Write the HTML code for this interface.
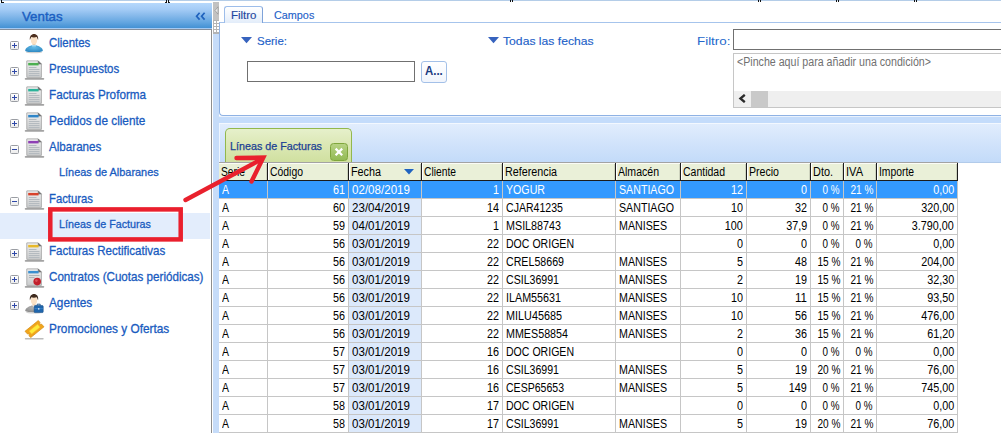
<!DOCTYPE html>
<html><head><meta charset="utf-8"><title>Ventas</title>
<style>
html,body{margin:0;padding:0;}
body{width:1001px;height:433px;overflow:hidden;background:#fff;position:relative;font-family:"Liberation Sans",sans-serif;}
div,svg{position:absolute;}
.t{white-space:nowrap;line-height:16px;}
.pm{width:7px;height:7px;border:1px solid #9a9da3;border-radius:1.5px;background:linear-gradient(#fff,#ececec);}
.pm i{position:absolute;left:1px;top:3px;width:5px;height:1px;background:#2f48a8;}
.pm b{position:absolute;left:3px;top:1px;width:1px;height:5px;background:#2f48a8;}
.vl{width:1px;background:#c6c6c6;}
.hl{height:1px;background:#c6c6c6;}
</style></head><body>

<div style="left:0px;top:0px;width:1001px;height:1px;background:#b4cde8"></div>
<div style="left:1px;top:0px;width:1px;height:3px;background:#111"></div>
<div style="left:2px;top:2px;width:2px;height:1px;background:#111"></div>
<div style="left:165px;top:2px;width:1px;height:1px;background:#222"></div>
<div style="left:166px;top:0px;width:1px;height:3px;background:#111"></div>
<div style="left:168px;top:0px;width:1px;height:3px;background:#111"></div>
<div style="left:169px;top:2px;width:1px;height:1px;background:#222"></div>
<div style="left:509px;top:2px;width:1px;height:1px;background:#222"></div>
<div style="left:510px;top:0px;width:1px;height:3px;background:#111"></div>
<div style="left:512px;top:0px;width:1px;height:3px;background:#111"></div>
<div style="left:513px;top:2px;width:1px;height:1px;background:#222"></div>
<div style="left:757px;top:2px;width:1px;height:1px;background:#222"></div>
<div style="left:758px;top:0px;width:1px;height:3px;background:#111"></div>
<div style="left:760px;top:0px;width:1px;height:3px;background:#111"></div>
<div style="left:761px;top:2px;width:1px;height:1px;background:#222"></div>
<div style="left:835px;top:2px;width:1px;height:1px;background:#222"></div>
<div style="left:836px;top:0px;width:1px;height:3px;background:#111"></div>
<div style="left:838px;top:0px;width:1px;height:3px;background:#111"></div>
<div style="left:839px;top:2px;width:1px;height:1px;background:#222"></div>
<div style="left:913px;top:2px;width:1px;height:1px;background:#222"></div>
<div style="left:914px;top:0px;width:1px;height:3px;background:#111"></div>
<div style="left:916px;top:0px;width:1px;height:3px;background:#111"></div>
<div style="left:917px;top:2px;width:1px;height:1px;background:#222"></div>
<div style="left:0px;top:3px;width:212px;height:25px;background:linear-gradient(#b6d8fc 0%,#a5ccf6 25%,#84b8ea 52%,#62a5e0 78%,#4391d4 100%)"></div>
<div style="left:0px;top:28px;width:212px;height:1px;background:#a4c9f2"></div>
<div style="left:0px;top:29px;width:212px;height:1px;background:#858e9b"></div>
<div style="left:211px;top:30px;width:1px;height:403px;background:#8e8e8e"></div>
<div class="t" style="left:22.10px;transform-origin:0 0;top:9.36px;font-size:12.8px;color:#1b5fc2;font-weight:normal;transform:scaleX(1.0372);-webkit-text-stroke:0.4px #1b5fc2;">Ventas</div>
<svg style="left:195px;top:12px" width="12" height="9" viewBox="0 0 12 9"><path d="M4.6 0.8 L1.6 4.2 L4.6 7.6 M9.6 0.8 L6.6 4.2 L9.6 7.6" fill="none" stroke="#1f62bd" stroke-width="1.7"/></svg>
<div style="left:0px;top:213px;width:210px;height:26px;background:#e3edfc"></div>
<div class="pm" style="left:10px;top:41px"><i></i><b></b></div>
<div style="left:24px;top:33px;width:22px;height:22px"><svg width="22" height="22" viewBox="0 0 22 22"><defs><radialGradient id="ub" cx="0.5" cy="0.35" r="0.7"><stop offset="0" stop-color="#63bbe8"/><stop offset="1" stop-color="#2b86c0"/></radialGradient></defs><ellipse cx="10" cy="19.3" rx="8" ry="1" fill="#d0d0d0"/><path d="M1.2 17.4 C1.5 14.6 5 13.2 7.8 12.2 L12.2 12.2 C15 13.2 18.5 14.6 18.8 17.4 C18.8 18.6 16 19 10 19 C4 19 1.2 18.6 1.2 17.4 Z" fill="url(#ub)"/><rect x="8.5" y="9.5" width="3" height="3.4" fill="#edc9a6"/><ellipse cx="10" cy="12.7" rx="2.5" ry="0.9" fill="#a9dcf5"/><ellipse cx="10" cy="7.3" rx="3.1" ry="4" fill="#fbe2c6"/><path d="M5.9 7 C5.3 3 7.5 0.9 10 0.9 C12.7 0.9 14.7 3 14.1 7 C13.5 6 13.4 4.7 12.5 4 C11 4.7 8.6 4.6 7.4 4 C6.6 4.8 6.5 6 5.9 7 Z" fill="#4e3020"/></svg></div>
<div class="t" style="left:49.30px;transform-origin:0 0;top:34.60px;font-size:12.7px;color:#195bc0;font-weight:normal;transform:scaleX(0.9001);-webkit-text-stroke:0.3px #195bc0;">Clientes</div>
<div class="pm" style="left:10px;top:67px"><i></i><b></b></div>
<div style="left:24px;top:59px;width:22px;height:22px"><svg width="22" height="22" viewBox="0 0 22 22"><defs><linearGradient id="dg" x1="0" y1="0" x2="0" y2="1"><stop offset="0" stop-color="#f0f0f0"/><stop offset="1" stop-color="#c9cbcc"/></linearGradient></defs><path d="M1.6 19.8 H19.4" stroke="#a2a2a2" stroke-width="1.7" stroke-linecap="round"/><path d="M2.8 1.9 H14.2 L17.4 5.1 V18.4 H2.8 Z" fill="url(#dg)" stroke="#b0b0b0"/><path d="M14.2 1.9 V5.1 H17.4 Z" fill="#6e6e6e" stroke="#6e6e6e" stroke-width="0.5"/><rect x="4.2" y="3.9" width="10.4" height="2.5" fill="#4caf50"/><path d="M4.8 8.5 H12.5 M4.8 10.5 H15.5 M4.8 12.5 H15.5 M4.8 14.5 H15.5 M4.8 16.5 H15.5" stroke="#b4babf" stroke-width="1"/></svg></div>
<div class="t" style="left:49.30px;transform-origin:0 0;top:60.60px;font-size:12.7px;color:#195bc0;font-weight:normal;transform:scaleX(0.9053);-webkit-text-stroke:0.3px #195bc0;">Presupuestos</div>
<div class="pm" style="left:10px;top:93px"><i></i><b></b></div>
<div style="left:24px;top:85px;width:22px;height:22px"><svg width="22" height="22" viewBox="0 0 22 22"><defs><linearGradient id="dg" x1="0" y1="0" x2="0" y2="1"><stop offset="0" stop-color="#f0f0f0"/><stop offset="1" stop-color="#c9cbcc"/></linearGradient></defs><path d="M1.6 19.8 H19.4" stroke="#a2a2a2" stroke-width="1.7" stroke-linecap="round"/><path d="M2.8 1.9 H14.2 L17.4 5.1 V18.4 H2.8 Z" fill="url(#dg)" stroke="#b0b0b0"/><path d="M14.2 1.9 V5.1 H17.4 Z" fill="#6e6e6e" stroke="#6e6e6e" stroke-width="0.5"/><rect x="4.2" y="3.9" width="10.4" height="2.5" fill="#2bb39a"/><path d="M4.8 8.5 H12.5 M4.8 10.5 H15.5 M4.8 12.5 H15.5 M4.8 14.5 H15.5 M4.8 16.5 H15.5" stroke="#b4babf" stroke-width="1"/></svg></div>
<div class="t" style="left:49.30px;transform-origin:0 0;top:86.60px;font-size:12.7px;color:#195bc0;font-weight:normal;transform:scaleX(0.9243);-webkit-text-stroke:0.3px #195bc0;">Facturas Proforma</div>
<div class="pm" style="left:10px;top:119px"><i></i><b></b></div>
<div style="left:24px;top:111px;width:22px;height:22px"><svg width="22" height="22" viewBox="0 0 22 22"><defs><linearGradient id="dg" x1="0" y1="0" x2="0" y2="1"><stop offset="0" stop-color="#f0f0f0"/><stop offset="1" stop-color="#c9cbcc"/></linearGradient></defs><path d="M1.6 19.8 H19.4" stroke="#a2a2a2" stroke-width="1.7" stroke-linecap="round"/><path d="M2.8 1.9 H14.2 L17.4 5.1 V18.4 H2.8 Z" fill="url(#dg)" stroke="#b0b0b0"/><path d="M14.2 1.9 V5.1 H17.4 Z" fill="#6e6e6e" stroke="#6e6e6e" stroke-width="0.5"/><rect x="4.2" y="3.9" width="10.4" height="2.5" fill="#2f86c9"/><path d="M4.8 8.5 H12.5 M4.8 10.5 H15.5 M4.8 12.5 H15.5 M4.8 14.5 H15.5 M4.8 16.5 H15.5" stroke="#b4babf" stroke-width="1"/></svg></div>
<div class="t" style="left:49.30px;transform-origin:0 0;top:112.60px;font-size:12.7px;color:#195bc0;font-weight:normal;transform:scaleX(0.9288);-webkit-text-stroke:0.3px #195bc0;">Pedidos de cliente</div>
<div class="pm" style="left:10px;top:145px"><i></i></div>
<div style="left:24px;top:137px;width:22px;height:22px"><svg width="22" height="22" viewBox="0 0 22 22"><defs><linearGradient id="dg" x1="0" y1="0" x2="0" y2="1"><stop offset="0" stop-color="#f0f0f0"/><stop offset="1" stop-color="#c9cbcc"/></linearGradient></defs><path d="M1.6 19.8 H19.4" stroke="#a2a2a2" stroke-width="1.7" stroke-linecap="round"/><path d="M2.8 1.9 H14.2 L17.4 5.1 V18.4 H2.8 Z" fill="url(#dg)" stroke="#b0b0b0"/><path d="M14.2 1.9 V5.1 H17.4 Z" fill="#6e6e6e" stroke="#6e6e6e" stroke-width="0.5"/><rect x="4.2" y="3.9" width="10.4" height="2.5" fill="#8e3fb5"/><path d="M4.8 8.5 H12.5 M4.8 10.5 H15.5 M4.8 12.5 H15.5 M4.8 14.5 H15.5 M4.8 16.5 H15.5" stroke="#b4babf" stroke-width="1"/></svg></div>
<div class="t" style="left:49.30px;transform-origin:0 0;top:138.60px;font-size:12.7px;color:#195bc0;font-weight:normal;transform:scaleX(0.9163);-webkit-text-stroke:0.3px #195bc0;">Albaranes</div>
<div class="t" style="left:58.60px;transform-origin:0 0;top:163.98px;font-size:11.6px;color:#195bc0;font-weight:normal;transform:scaleX(0.9435);-webkit-text-stroke:0.3px #195bc0;">Líneas de Albaranes</div>
<div class="pm" style="left:10px;top:197px"><i></i></div>
<div style="left:24px;top:189px;width:22px;height:22px"><svg width="22" height="22" viewBox="0 0 22 22"><defs><linearGradient id="dg" x1="0" y1="0" x2="0" y2="1"><stop offset="0" stop-color="#f0f0f0"/><stop offset="1" stop-color="#c9cbcc"/></linearGradient></defs><path d="M1.6 19.8 H19.4" stroke="#a2a2a2" stroke-width="1.7" stroke-linecap="round"/><path d="M2.8 1.9 H14.2 L17.4 5.1 V18.4 H2.8 Z" fill="url(#dg)" stroke="#b0b0b0"/><path d="M14.2 1.9 V5.1 H17.4 Z" fill="#6e6e6e" stroke="#6e6e6e" stroke-width="0.5"/><rect x="4.2" y="3.9" width="10.4" height="2.5" fill="#d8432b"/><path d="M4.8 8.5 H12.5 M4.8 10.5 H15.5 M4.8 12.5 H15.5 M4.8 14.5 H15.5 M4.8 16.5 H15.5" stroke="#b4babf" stroke-width="1"/></svg></div>
<div class="t" style="left:49.30px;transform-origin:0 0;top:190.60px;font-size:12.7px;color:#195bc0;font-weight:normal;transform:scaleX(0.8906);-webkit-text-stroke:0.3px #195bc0;">Facturas</div>
<div class="t" style="left:58.60px;transform-origin:0 0;top:215.98px;font-size:11.6px;color:#195bc0;font-weight:normal;transform:scaleX(0.9265);-webkit-text-stroke:0.3px #195bc0;">Líneas de Facturas</div>
<div class="pm" style="left:10px;top:249px"><i></i><b></b></div>
<div style="left:24px;top:241px;width:22px;height:22px"><svg width="22" height="22" viewBox="0 0 22 22"><defs><linearGradient id="dg" x1="0" y1="0" x2="0" y2="1"><stop offset="0" stop-color="#f0f0f0"/><stop offset="1" stop-color="#c9cbcc"/></linearGradient></defs><path d="M1.6 19.8 H19.4" stroke="#a2a2a2" stroke-width="1.7" stroke-linecap="round"/><path d="M2.8 1.9 H14.2 L17.4 5.1 V18.4 H2.8 Z" fill="url(#dg)" stroke="#b0b0b0"/><path d="M14.2 1.9 V5.1 H17.4 Z" fill="#6e6e6e" stroke="#6e6e6e" stroke-width="0.5"/><rect x="4.2" y="3.9" width="10.4" height="2.5" fill="#e8b92a"/><path d="M4.8 8.5 H12.5 M4.8 10.5 H15.5 M4.8 12.5 H15.5 M4.8 14.5 H15.5 M4.8 16.5 H15.5" stroke="#b4babf" stroke-width="1"/></svg></div>
<div class="t" style="left:49.30px;transform-origin:0 0;top:242.60px;font-size:12.7px;color:#195bc0;font-weight:normal;transform:scaleX(0.9112);-webkit-text-stroke:0.3px #195bc0;">Facturas Rectificativas</div>
<div class="pm" style="left:10px;top:275px"><i></i><b></b></div>
<div style="left:24px;top:267px;width:22px;height:22px"><svg width="22" height="22" viewBox="0 0 22 22"><defs><linearGradient id="dg" x1="0" y1="0" x2="0" y2="1"><stop offset="0" stop-color="#f0f0f0"/><stop offset="1" stop-color="#c9cbcc"/></linearGradient></defs><path d="M1.6 19.8 H19.4" stroke="#a2a2a2" stroke-width="1.7" stroke-linecap="round"/><path d="M2.8 1.9 H14.2 L17.4 5.1 V18.4 H2.8 Z" fill="url(#dg)" stroke="#b0b0b0"/><path d="M14.2 1.9 V5.1 H17.4 Z" fill="#6e6e6e" stroke="#6e6e6e" stroke-width="0.5"/><rect x="4.2" y="3.9" width="10.4" height="2.5" fill="#3a8fd0"/><path d="M5 8.5 H15.5 M5 10.5 H10.5" stroke="#aeb4b8"/><circle cx="13.2" cy="14.6" r="3.8" fill="#c2202c"/><circle cx="12.4" cy="13.6" r="1.3" fill="#d9525a"/></svg></div>
<div class="t" style="left:49.30px;transform-origin:0 0;top:268.60px;font-size:12.7px;color:#195bc0;font-weight:normal;transform:scaleX(0.9164);-webkit-text-stroke:0.3px #195bc0;">Contratos (Cuotas periódicas)</div>
<div class="pm" style="left:10px;top:301px"><i></i><b></b></div>
<div style="left:24px;top:293px;width:22px;height:22px"><svg width="22" height="22" viewBox="0 0 22 22"><defs><radialGradient id="ab" cx="0.5" cy="0.35" r="0.7"><stop offset="0" stop-color="#b4b4b4"/><stop offset="1" stop-color="#8a8a8a"/></radialGradient></defs><ellipse cx="10" cy="19.5" rx="8" ry="0.9" fill="#d4d4d4"/><path d="M1.2 17.6 C1.5 14.8 5 13.4 7.8 12.4 L12.2 12.4 C15 13.4 17.5 14.8 17.8 17.6 C17.8 18.8 16 19.2 10 19.2 C4 19.2 1.2 18.8 1.2 17.6 Z" fill="url(#ab)"/><rect x="8.5" y="9.7" width="3" height="3.4" fill="#edc9a6"/><path d="M8.2 12.4 L10 14.6 L11.8 12.4 Z" fill="#f4f4f4"/><ellipse cx="10" cy="7.5" rx="3.1" ry="4" fill="#fbe2c6"/><path d="M5.9 7.2 C5.3 3.2 7.5 1.1 10 1.1 C12.7 1.1 14.7 3.2 14.1 7.2 C13.5 6.2 13.4 4.9 12.5 4.2 C11 4.9 8.6 4.8 7.4 4.2 C6.6 5 6.5 6.2 5.9 7.2 Z" fill="#3e2a1e"/><rect x="10.2" y="12.6" width="9" height="7" rx="0.9" fill="#1f66ad" stroke="#184f88" stroke-width="0.6"/><path d="M13.2 12.6 V11.2 H16.2 V12.6" fill="none" stroke="#184f88" stroke-width="0.9"/><rect x="10.5" y="15.3" width="8.4" height="0.8" fill="#3f86cc"/><rect x="14.1" y="15.1" width="1.3" height="1.5" fill="#e4eefa"/></svg></div>
<div class="t" style="left:49.30px;transform-origin:0 0;top:294.60px;font-size:12.7px;color:#195bc0;font-weight:normal;transform:scaleX(0.9291);-webkit-text-stroke:0.3px #195bc0;">Agentes</div>
<div style="left:24px;top:319px;width:22px;height:22px"><svg width="22" height="22" viewBox="0 0 22 22"><path d="M1.5 19.7 H19" stroke="#bcbcbc" stroke-width="1.4" stroke-linecap="round"/><path d="M1 12.3 L14.3 1.5 L16 3.4 A1 1 0 0 0 17.4 5 L20 7.8 L6.7 18.6 L5 16.7 A1 1 0 0 0 3.6 15.1 Z" fill="#f1a41c" stroke="#d38d10" stroke-width="0.7"/><path d="M5.2 12.1 L13.6 5.3 L16 8.2 L7.6 15 Z" fill="#ffea3a" stroke="#f6c62a" stroke-width="0.6"/></svg></div>
<div class="t" style="left:49.30px;transform-origin:0 0;top:320.60px;font-size:12.7px;color:#195bc0;font-weight:normal;transform:scaleX(0.9314);-webkit-text-stroke:0.3px #195bc0;">Promociones y Ofertas</div>
<div style="left:213px;top:2px;width:6px;height:431px;background:#c6dcf9"></div>
<div style="left:213px;top:2px;width:6px;height:18px;background:#c2c2c2"></div>
<div style="left:213px;top:20px;width:6px;height:14px;background:#b4b4b4"></div>
<svg style="left:214px;top:6px" width="5" height="9"><path d="M4 0.8 L1 4.5 L4 8.2 Z" fill="#e8e8e8" stroke="#909090" stroke-width="0.7"/></svg>
<svg style="left:213px;top:20px" width="6" height="14"><g fill="#ffffff"><rect x="1" y="1" width="2" height="2"/><rect x="4" y="1" width="2" height="2"/><rect x="1" y="4" width="2" height="2"/><rect x="4" y="4" width="2" height="2"/><rect x="1" y="7" width="2" height="2"/><rect x="4" y="7" width="2" height="2"/><rect x="1" y="10" width="2" height="2"/><rect x="4" y="10" width="2" height="2"/></g></svg>
<div style="left:219px;top:2px;width:782px;height:114px;background:#fff"></div>
<div style="left:219px;top:22px;width:783px;height:94px;box-sizing:border-box;border:1px solid #8fb2e4;border-top-color:#a6c4ec;border-right:none;border-radius:0 0 0 4px"></div>
<div style="left:224px;top:6px;width:39px;height:17px;box-sizing:border-box;border:1px solid #9dbdea;border-right-color:#7fa3d9;border-bottom:none;border-radius:3px 3px 0 0;background:linear-gradient(#ffffff,#e3edfa)"></div>
<div style="left:225px;top:22px;width:37px;height:1px;background:#e3edfa"></div>
<div class="t" style="left:230.50px;transform-origin:0 0;top:7.08px;font-size:11.3px;color:#1f48a0;font-weight:normal;transform:scaleX(1.0155);-webkit-text-stroke:0.15px #1f48a0;">Filtro</div>
<div class="t" style="left:273.70px;transform-origin:0 0;top:7.08px;font-size:11.3px;color:#1c60c8;font-weight:normal;transform:scaleX(0.9578);-webkit-text-stroke:0.12px #1c60c8;">Campos</div>
<svg style="left:241px;top:37px" width="12" height="7"><path d="M0 0 H11 L5.5 6.2 Z" fill="#3763be"/></svg>
<div class="t" style="left:256.70px;transform-origin:0 0;top:33.08px;font-size:11.3px;color:#1c60c8;font-weight:normal;transform:scaleX(1.0163);-webkit-text-stroke:0.12px #1c60c8;">Serie:</div>
<div style="left:247px;top:61px;width:168px;height:21px;box-sizing:border-box;border:1px solid #707070;background:#fff"></div>
<div style="left:421px;top:61px;width:26px;height:22px;box-sizing:border-box;border:1px solid #a3c0e8;border-radius:3px;background:linear-gradient(#ffffff,#f1f5fc)"></div>
<div class="t" style="left:425.30px;transform-origin:0 0;top:62.84px;font-size:12px;color:#1a3a80;font-weight:bold;transform:scaleX(0.9535);">A...</div>
<svg style="left:488.1px;top:37px" width="12" height="7"><path d="M0 0 H11 L5.5 6.2 Z" fill="#3763be"/></svg>
<div class="t" style="left:503.30px;transform-origin:0 0;top:33.08px;font-size:11.3px;color:#1c60c8;font-weight:normal;transform:scaleX(1.0776);-webkit-text-stroke:0.12px #1c60c8;">Todas las fechas</div>
<div class="t" style="left:697.40px;transform-origin:0 0;top:33.08px;font-size:11.3px;color:#2468cc;font-weight:normal;transform:scaleX(1.1823);">Filtro:</div>
<div style="left:733px;top:29px;width:270px;height:21px;box-sizing:border-box;border:1px solid #707070;background:#fff"></div>
<div style="left:733px;top:53px;width:270px;height:55px;box-sizing:border-box;border:1px solid #c6c6c6;background:#fff"></div>
<div class="t" style="left:736.50px;transform-origin:0 0;top:54.34px;font-size:12.3px;color:#707070;font-weight:normal;transform:scaleX(0.8649);">&lt;Pinche aquí para añadir una condición&gt;</div>
<div style="left:734px;top:91px;width:268px;height:16px;background:#efefef"></div>
<div style="left:751px;top:91px;width:17px;height:16px;background:#c9c9c9"></div>
<svg style="left:738px;top:94px" width="9" height="9"><path d="M6.8 0.8 L2.4 4.5 L6.8 8.2" fill="none" stroke="#2a2a2a" stroke-width="2.3"/></svg>
<div style="left:219px;top:116px;width:782px;height:1px;background:#eaf2fd"></div>
<div style="left:219px;top:117px;width:782px;height:6px;background:#c4dcfb"></div>
<div style="left:219px;top:123px;width:782px;height:1px;background:#f3f8ff"></div>
<div style="left:219px;top:124px;width:782px;height:38px;background:linear-gradient(#e1edfd 0%,#d3e4fb 45%,#c3dbf9 100%)"></div>
<div style="left:219px;top:124px;width:1px;height:38px;background:#eef5fe"></div>
<div style="left:219px;top:162px;width:782px;height:1px;background:#b2cbea"></div>
<div style="left:225px;top:128px;width:127px;height:34px;box-sizing:border-box;border:1px solid #93b84c;border-bottom:none;border-radius:5px 5px 0 0;background:linear-gradient(#e6f0cb 0%,#dde9b8 40%,#d0e0a0 100%)"></div>
<div class="t" style="left:230.40px;transform-origin:0 0;top:138.08px;font-size:11.3px;color:#1b3f94;font-weight:normal;transform:scaleX(0.9511);-webkit-text-stroke:0.25px #1b3f94;">Líneas de Facturas</div>
<div style="left:330px;top:143px;width:18px;height:18px;box-sizing:border-box;border:1px solid #7fa63c;border-radius:3.5px;background:linear-gradient(#b7d283,#93ba55)"></div>
<svg style="left:334px;top:147px" width="10" height="10"><path d="M1.6 1.6 L8.2 8.2 M8.2 1.6 L1.6 8.2" stroke="#fff" stroke-width="2.2"/></svg>
<div style="left:219px;top:163px;width:738px;height:17px;background:#eaf0d8"></div>
<div style="left:219px;top:163px;width:738px;height:1px;background:#fbfcf6"></div>
<div style="left:219px;top:162px;width:739px;height:1px;background:#a3a3a3"></div>
<div style="left:219px;top:180px;width:739px;height:1px;background:#1c1c1c"></div>
<div style="left:349px;top:181px;width:72px;height:252px;background:#dce9fb"></div>
<div style="left:219px;top:181px;width:738px;height:17px;background:#3399ff"></div>
<div style="left:267px;top:163px;width:1px;height:18px;background:#1c1c1c"></div>
<div style="left:266px;top:164px;width:1px;height:16px;background:#cdd2bd"></div>
<div style="left:268px;top:164px;width:1px;height:16px;background:#fff"></div>
<div style="left:348px;top:163px;width:1px;height:18px;background:#1c1c1c"></div>
<div style="left:347px;top:164px;width:1px;height:16px;background:#cdd2bd"></div>
<div style="left:349px;top:164px;width:1px;height:16px;background:#fff"></div>
<div style="left:421px;top:163px;width:1px;height:18px;background:#1c1c1c"></div>
<div style="left:420px;top:164px;width:1px;height:16px;background:#cdd2bd"></div>
<div style="left:422px;top:164px;width:1px;height:16px;background:#fff"></div>
<div style="left:502px;top:163px;width:1px;height:18px;background:#1c1c1c"></div>
<div style="left:501px;top:164px;width:1px;height:16px;background:#cdd2bd"></div>
<div style="left:503px;top:164px;width:1px;height:16px;background:#fff"></div>
<div style="left:615px;top:163px;width:1px;height:18px;background:#1c1c1c"></div>
<div style="left:614px;top:164px;width:1px;height:16px;background:#cdd2bd"></div>
<div style="left:616px;top:164px;width:1px;height:16px;background:#fff"></div>
<div style="left:680px;top:163px;width:1px;height:18px;background:#1c1c1c"></div>
<div style="left:679px;top:164px;width:1px;height:16px;background:#cdd2bd"></div>
<div style="left:681px;top:164px;width:1px;height:16px;background:#fff"></div>
<div style="left:746px;top:163px;width:1px;height:18px;background:#1c1c1c"></div>
<div style="left:745px;top:164px;width:1px;height:16px;background:#cdd2bd"></div>
<div style="left:747px;top:164px;width:1px;height:16px;background:#fff"></div>
<div style="left:810px;top:163px;width:1px;height:18px;background:#1c1c1c"></div>
<div style="left:809px;top:164px;width:1px;height:16px;background:#cdd2bd"></div>
<div style="left:811px;top:164px;width:1px;height:16px;background:#fff"></div>
<div style="left:843px;top:163px;width:1px;height:18px;background:#1c1c1c"></div>
<div style="left:842px;top:164px;width:1px;height:16px;background:#cdd2bd"></div>
<div style="left:844px;top:164px;width:1px;height:16px;background:#fff"></div>
<div style="left:876px;top:163px;width:1px;height:18px;background:#1c1c1c"></div>
<div style="left:875px;top:164px;width:1px;height:16px;background:#cdd2bd"></div>
<div style="left:877px;top:164px;width:1px;height:16px;background:#fff"></div>
<div style="left:957px;top:163px;width:1px;height:18px;background:#1c1c1c"></div>
<div style="left:956px;top:164px;width:1px;height:16px;background:#cdd2bd"></div>
<div class="t" style="left:220.50px;transform-origin:0 0;top:163.67px;font-size:12.5px;color:#000;font-weight:normal;transform:scaleX(0.8224);">Serie</div>
<div class="t" style="left:270.20px;transform-origin:0 0;top:163.67px;font-size:12.5px;color:#000;font-weight:normal;transform:scaleX(0.8331);">Código</div>
<div class="t" style="left:351.20px;transform-origin:0 0;top:163.67px;font-size:12.5px;color:#000;font-weight:normal;transform:scaleX(0.8635);">Fecha</div>
<div class="t" style="left:424.20px;transform-origin:0 0;top:163.67px;font-size:12.5px;color:#000;font-weight:normal;transform:scaleX(0.8224);">Cliente</div>
<div class="t" style="left:505.20px;transform-origin:0 0;top:163.67px;font-size:12.5px;color:#000;font-weight:normal;transform:scaleX(0.8602);">Referencia</div>
<div class="t" style="left:618.20px;transform-origin:0 0;top:163.67px;font-size:12.5px;color:#000;font-weight:normal;transform:scaleX(0.8430);">Almacén</div>
<div class="t" style="left:683.20px;transform-origin:0 0;top:163.67px;font-size:12.5px;color:#000;font-weight:normal;transform:scaleX(0.8394);">Cantidad</div>
<div class="t" style="left:749.20px;transform-origin:0 0;top:163.67px;font-size:12.5px;color:#000;font-weight:normal;transform:scaleX(0.8467);">Precio</div>
<div class="t" style="left:813.20px;transform-origin:0 0;top:163.67px;font-size:12.5px;color:#000;font-weight:normal;transform:scaleX(0.8724);">Dto.</div>
<div class="t" style="left:846.20px;transform-origin:0 0;top:163.67px;font-size:12.5px;color:#000;font-weight:normal;transform:scaleX(0.8845);">IVA</div>
<div class="t" style="left:879.20px;transform-origin:0 0;top:163.67px;font-size:12.5px;color:#000;font-weight:normal;transform:scaleX(0.8259);">Importe</div>
<svg style="left:404px;top:169px" width="11" height="7"><path d="M0 0 H10 L5 5.6 Z" fill="#1f63c0"/></svg>
<div class="vl" style="left:267px;top:181px;height:252px"></div>
<div class="vl" style="left:348px;top:181px;height:252px"></div>
<div class="vl" style="left:421px;top:181px;height:252px"></div>
<div class="vl" style="left:502px;top:181px;height:252px"></div>
<div class="vl" style="left:615px;top:181px;height:252px"></div>
<div class="vl" style="left:680px;top:181px;height:252px"></div>
<div class="vl" style="left:746px;top:181px;height:252px"></div>
<div class="vl" style="left:810px;top:181px;height:252px"></div>
<div class="vl" style="left:843px;top:181px;height:252px"></div>
<div class="vl" style="left:876px;top:181px;height:252px"></div>
<div class="vl" style="left:957px;top:181px;height:252px"></div>
<div class="hl" style="left:219px;top:198px;width:739px"></div>
<div class="t" style="left:221.50px;transform-origin:0 0;top:181.67px;font-size:12.5px;color:#fff;font-weight:normal;transform:scaleX(0.8396);">A</div>
<div class="t" style="right:656.00px;transform-origin:100% 0;top:181.67px;font-size:12.5px;color:#fff;font-weight:normal;transform:scaleX(0.8631);">61</div>
<div class="t" style="left:351.60px;transform-origin:0 0;top:181.67px;font-size:12.5px;color:#fff;font-weight:normal;transform:scaleX(0.9271);">02/08/2019</div>
<div class="t" style="right:502.00px;transform-origin:100% 0;top:181.67px;font-size:12.5px;color:#fff;font-weight:normal;transform:scaleX(0.8631);">1</div>
<div class="t" style="left:505.60px;transform-origin:0 0;top:181.67px;font-size:12.5px;color:#fff;font-weight:normal;transform:scaleX(0.8508);">YOGUR</div>
<div class="t" style="left:618.60px;transform-origin:0 0;top:181.67px;font-size:12.5px;color:#fff;font-weight:normal;transform:scaleX(0.8515);">SANTIAGO</div>
<div class="t" style="right:258.00px;transform-origin:100% 0;top:181.67px;font-size:12.5px;color:#fff;font-weight:normal;transform:scaleX(0.8631);">12</div>
<div class="t" style="right:194.00px;transform-origin:100% 0;top:181.67px;font-size:12.5px;color:#fff;font-weight:normal;transform:scaleX(0.8631);">0</div>
<div class="t" style="right:161.00px;transform-origin:100% 0;top:181.67px;font-size:12.5px;color:#fff;font-weight:normal;transform:scaleX(0.7893);">0 %</div>
<div class="t" style="right:128.00px;transform-origin:100% 0;top:181.67px;font-size:12.5px;color:#fff;font-weight:normal;transform:scaleX(0.8073);">21 %</div>
<div class="t" style="right:47.00px;transform-origin:100% 0;top:181.67px;font-size:12.5px;color:#fff;font-weight:normal;transform:scaleX(0.8632);">0,00</div>
<div class="hl" style="left:219px;top:216px;width:739px"></div>
<div class="t" style="left:221.50px;transform-origin:0 0;top:199.67px;font-size:12.5px;color:#000;font-weight:normal;transform:scaleX(0.8396);">A</div>
<div class="t" style="right:656.00px;transform-origin:100% 0;top:199.67px;font-size:12.5px;color:#000;font-weight:normal;transform:scaleX(0.8631);">60</div>
<div class="t" style="left:351.60px;transform-origin:0 0;top:199.67px;font-size:12.5px;color:#000;font-weight:normal;transform:scaleX(0.9271);">23/04/2019</div>
<div class="t" style="right:502.00px;transform-origin:100% 0;top:199.67px;font-size:12.5px;color:#000;font-weight:normal;transform:scaleX(0.8631);">14</div>
<div class="t" style="left:505.60px;transform-origin:0 0;top:199.67px;font-size:12.5px;color:#000;font-weight:normal;transform:scaleX(0.8457);">CJAR41235</div>
<div class="t" style="left:618.60px;transform-origin:0 0;top:199.67px;font-size:12.5px;color:#000;font-weight:normal;transform:scaleX(0.8515);">SANTIAGO</div>
<div class="t" style="right:258.00px;transform-origin:100% 0;top:199.67px;font-size:12.5px;color:#000;font-weight:normal;transform:scaleX(0.8631);">10</div>
<div class="t" style="right:194.00px;transform-origin:100% 0;top:199.67px;font-size:12.5px;color:#000;font-weight:normal;transform:scaleX(0.8631);">32</div>
<div class="t" style="right:161.00px;transform-origin:100% 0;top:199.67px;font-size:12.5px;color:#000;font-weight:normal;transform:scaleX(0.7893);">0 %</div>
<div class="t" style="right:128.00px;transform-origin:100% 0;top:199.67px;font-size:12.5px;color:#000;font-weight:normal;transform:scaleX(0.8073);">21 %</div>
<div class="t" style="right:47.00px;transform-origin:100% 0;top:199.67px;font-size:12.5px;color:#000;font-weight:normal;transform:scaleX(0.8631);">320,00</div>
<div class="hl" style="left:219px;top:234px;width:739px"></div>
<div class="t" style="left:221.50px;transform-origin:0 0;top:217.67px;font-size:12.5px;color:#000;font-weight:normal;transform:scaleX(0.8396);">A</div>
<div class="t" style="right:656.00px;transform-origin:100% 0;top:217.67px;font-size:12.5px;color:#000;font-weight:normal;transform:scaleX(0.8631);">59</div>
<div class="t" style="left:351.60px;transform-origin:0 0;top:217.67px;font-size:12.5px;color:#000;font-weight:normal;transform:scaleX(0.9271);">04/01/2019</div>
<div class="t" style="right:502.00px;transform-origin:100% 0;top:217.67px;font-size:12.5px;color:#000;font-weight:normal;transform:scaleX(0.8631);">1</div>
<div class="t" style="left:505.60px;transform-origin:0 0;top:217.67px;font-size:12.5px;color:#000;font-weight:normal;transform:scaleX(0.8603);">MSIL88743</div>
<div class="t" style="left:618.60px;transform-origin:0 0;top:217.67px;font-size:12.5px;color:#000;font-weight:normal;transform:scaleX(0.8531);">MANISES</div>
<div class="t" style="right:258.00px;transform-origin:100% 0;top:217.67px;font-size:12.5px;color:#000;font-weight:normal;transform:scaleX(0.8631);">100</div>
<div class="t" style="right:194.00px;transform-origin:100% 0;top:217.67px;font-size:12.5px;color:#000;font-weight:normal;transform:scaleX(0.8632);">37,9</div>
<div class="t" style="right:161.00px;transform-origin:100% 0;top:217.67px;font-size:12.5px;color:#000;font-weight:normal;transform:scaleX(0.7893);">0 %</div>
<div class="t" style="right:128.00px;transform-origin:100% 0;top:217.67px;font-size:12.5px;color:#000;font-weight:normal;transform:scaleX(0.8073);">21 %</div>
<div class="t" style="right:47.00px;transform-origin:100% 0;top:217.67px;font-size:12.5px;color:#000;font-weight:normal;transform:scaleX(0.8632);">3.790,00</div>
<div class="hl" style="left:219px;top:252px;width:739px"></div>
<div class="t" style="left:221.50px;transform-origin:0 0;top:235.67px;font-size:12.5px;color:#000;font-weight:normal;transform:scaleX(0.8396);">A</div>
<div class="t" style="right:656.00px;transform-origin:100% 0;top:235.67px;font-size:12.5px;color:#000;font-weight:normal;transform:scaleX(0.8631);">56</div>
<div class="t" style="left:351.60px;transform-origin:0 0;top:235.67px;font-size:12.5px;color:#000;font-weight:normal;transform:scaleX(0.9271);">03/01/2019</div>
<div class="t" style="right:502.00px;transform-origin:100% 0;top:235.67px;font-size:12.5px;color:#000;font-weight:normal;transform:scaleX(0.8631);">22</div>
<div class="t" style="left:505.60px;transform-origin:0 0;top:235.67px;font-size:12.5px;color:#000;font-weight:normal;transform:scaleX(0.8441);">DOC ORIGEN</div>
<div class="t" style="right:258.00px;transform-origin:100% 0;top:235.67px;font-size:12.5px;color:#000;font-weight:normal;transform:scaleX(0.8631);">0</div>
<div class="t" style="right:194.00px;transform-origin:100% 0;top:235.67px;font-size:12.5px;color:#000;font-weight:normal;transform:scaleX(0.8631);">0</div>
<div class="t" style="right:161.00px;transform-origin:100% 0;top:235.67px;font-size:12.5px;color:#000;font-weight:normal;transform:scaleX(0.7893);">0 %</div>
<div class="t" style="right:128.00px;transform-origin:100% 0;top:235.67px;font-size:12.5px;color:#000;font-weight:normal;transform:scaleX(0.7893);">0 %</div>
<div class="t" style="right:47.00px;transform-origin:100% 0;top:235.67px;font-size:12.5px;color:#000;font-weight:normal;transform:scaleX(0.8632);">0,00</div>
<div class="hl" style="left:219px;top:270px;width:739px"></div>
<div class="t" style="left:221.50px;transform-origin:0 0;top:253.67px;font-size:12.5px;color:#000;font-weight:normal;transform:scaleX(0.8396);">A</div>
<div class="t" style="right:656.00px;transform-origin:100% 0;top:253.67px;font-size:12.5px;color:#000;font-weight:normal;transform:scaleX(0.8631);">56</div>
<div class="t" style="left:351.60px;transform-origin:0 0;top:253.67px;font-size:12.5px;color:#000;font-weight:normal;transform:scaleX(0.9271);">03/01/2019</div>
<div class="t" style="right:502.00px;transform-origin:100% 0;top:253.67px;font-size:12.5px;color:#000;font-weight:normal;transform:scaleX(0.8631);">22</div>
<div class="t" style="left:505.60px;transform-origin:0 0;top:253.67px;font-size:12.5px;color:#000;font-weight:normal;transform:scaleX(0.8516);">CREL58669</div>
<div class="t" style="left:618.60px;transform-origin:0 0;top:253.67px;font-size:12.5px;color:#000;font-weight:normal;transform:scaleX(0.8531);">MANISES</div>
<div class="t" style="right:258.00px;transform-origin:100% 0;top:253.67px;font-size:12.5px;color:#000;font-weight:normal;transform:scaleX(0.8631);">5</div>
<div class="t" style="right:194.00px;transform-origin:100% 0;top:253.67px;font-size:12.5px;color:#000;font-weight:normal;transform:scaleX(0.8631);">48</div>
<div class="t" style="right:161.00px;transform-origin:100% 0;top:253.67px;font-size:12.5px;color:#000;font-weight:normal;transform:scaleX(0.8073);">15 %</div>
<div class="t" style="right:128.00px;transform-origin:100% 0;top:253.67px;font-size:12.5px;color:#000;font-weight:normal;transform:scaleX(0.8073);">21 %</div>
<div class="t" style="right:47.00px;transform-origin:100% 0;top:253.67px;font-size:12.5px;color:#000;font-weight:normal;transform:scaleX(0.8631);">204,00</div>
<div class="hl" style="left:219px;top:288px;width:739px"></div>
<div class="t" style="left:221.50px;transform-origin:0 0;top:271.67px;font-size:12.5px;color:#000;font-weight:normal;transform:scaleX(0.8396);">A</div>
<div class="t" style="right:656.00px;transform-origin:100% 0;top:271.67px;font-size:12.5px;color:#000;font-weight:normal;transform:scaleX(0.8631);">56</div>
<div class="t" style="left:351.60px;transform-origin:0 0;top:271.67px;font-size:12.5px;color:#000;font-weight:normal;transform:scaleX(0.9271);">03/01/2019</div>
<div class="t" style="right:502.00px;transform-origin:100% 0;top:271.67px;font-size:12.5px;color:#000;font-weight:normal;transform:scaleX(0.8631);">22</div>
<div class="t" style="left:505.60px;transform-origin:0 0;top:271.67px;font-size:12.5px;color:#000;font-weight:normal;transform:scaleX(0.8473);">CSIL36991</div>
<div class="t" style="left:618.60px;transform-origin:0 0;top:271.67px;font-size:12.5px;color:#000;font-weight:normal;transform:scaleX(0.8531);">MANISES</div>
<div class="t" style="right:258.00px;transform-origin:100% 0;top:271.67px;font-size:12.5px;color:#000;font-weight:normal;transform:scaleX(0.8631);">2</div>
<div class="t" style="right:194.00px;transform-origin:100% 0;top:271.67px;font-size:12.5px;color:#000;font-weight:normal;transform:scaleX(0.8631);">19</div>
<div class="t" style="right:161.00px;transform-origin:100% 0;top:271.67px;font-size:12.5px;color:#000;font-weight:normal;transform:scaleX(0.8073);">15 %</div>
<div class="t" style="right:128.00px;transform-origin:100% 0;top:271.67px;font-size:12.5px;color:#000;font-weight:normal;transform:scaleX(0.8073);">21 %</div>
<div class="t" style="right:47.00px;transform-origin:100% 0;top:271.67px;font-size:12.5px;color:#000;font-weight:normal;transform:scaleX(0.8632);">32,30</div>
<div class="hl" style="left:219px;top:306px;width:739px"></div>
<div class="t" style="left:221.50px;transform-origin:0 0;top:289.67px;font-size:12.5px;color:#000;font-weight:normal;transform:scaleX(0.8396);">A</div>
<div class="t" style="right:656.00px;transform-origin:100% 0;top:289.67px;font-size:12.5px;color:#000;font-weight:normal;transform:scaleX(0.8631);">56</div>
<div class="t" style="left:351.60px;transform-origin:0 0;top:289.67px;font-size:12.5px;color:#000;font-weight:normal;transform:scaleX(0.9271);">03/01/2019</div>
<div class="t" style="right:502.00px;transform-origin:100% 0;top:289.67px;font-size:12.5px;color:#000;font-weight:normal;transform:scaleX(0.8631);">22</div>
<div class="t" style="left:505.60px;transform-origin:0 0;top:289.67px;font-size:12.5px;color:#000;font-weight:normal;transform:scaleX(0.8603);">ILAM55631</div>
<div class="t" style="left:618.60px;transform-origin:0 0;top:289.67px;font-size:12.5px;color:#000;font-weight:normal;transform:scaleX(0.8531);">MANISES</div>
<div class="t" style="right:258.00px;transform-origin:100% 0;top:289.67px;font-size:12.5px;color:#000;font-weight:normal;transform:scaleX(0.8631);">10</div>
<div class="t" style="right:194.00px;transform-origin:100% 0;top:289.67px;font-size:12.5px;color:#000;font-weight:normal;transform:scaleX(0.9248);">11</div>
<div class="t" style="right:161.00px;transform-origin:100% 0;top:289.67px;font-size:12.5px;color:#000;font-weight:normal;transform:scaleX(0.8073);">15 %</div>
<div class="t" style="right:128.00px;transform-origin:100% 0;top:289.67px;font-size:12.5px;color:#000;font-weight:normal;transform:scaleX(0.8073);">21 %</div>
<div class="t" style="right:47.00px;transform-origin:100% 0;top:289.67px;font-size:12.5px;color:#000;font-weight:normal;transform:scaleX(0.8632);">93,50</div>
<div class="hl" style="left:219px;top:324px;width:739px"></div>
<div class="t" style="left:221.50px;transform-origin:0 0;top:307.67px;font-size:12.5px;color:#000;font-weight:normal;transform:scaleX(0.8396);">A</div>
<div class="t" style="right:656.00px;transform-origin:100% 0;top:307.67px;font-size:12.5px;color:#000;font-weight:normal;transform:scaleX(0.8631);">56</div>
<div class="t" style="left:351.60px;transform-origin:0 0;top:307.67px;font-size:12.5px;color:#000;font-weight:normal;transform:scaleX(0.9271);">03/01/2019</div>
<div class="t" style="right:502.00px;transform-origin:100% 0;top:307.67px;font-size:12.5px;color:#000;font-weight:normal;transform:scaleX(0.8631);">22</div>
<div class="t" style="left:505.60px;transform-origin:0 0;top:307.67px;font-size:12.5px;color:#000;font-weight:normal;transform:scaleX(0.8665);">MILU45685</div>
<div class="t" style="left:618.60px;transform-origin:0 0;top:307.67px;font-size:12.5px;color:#000;font-weight:normal;transform:scaleX(0.8531);">MANISES</div>
<div class="t" style="right:258.00px;transform-origin:100% 0;top:307.67px;font-size:12.5px;color:#000;font-weight:normal;transform:scaleX(0.8631);">10</div>
<div class="t" style="right:194.00px;transform-origin:100% 0;top:307.67px;font-size:12.5px;color:#000;font-weight:normal;transform:scaleX(0.8631);">56</div>
<div class="t" style="right:161.00px;transform-origin:100% 0;top:307.67px;font-size:12.5px;color:#000;font-weight:normal;transform:scaleX(0.8073);">15 %</div>
<div class="t" style="right:128.00px;transform-origin:100% 0;top:307.67px;font-size:12.5px;color:#000;font-weight:normal;transform:scaleX(0.8073);">21 %</div>
<div class="t" style="right:47.00px;transform-origin:100% 0;top:307.67px;font-size:12.5px;color:#000;font-weight:normal;transform:scaleX(0.8631);">476,00</div>
<div class="hl" style="left:219px;top:342px;width:739px"></div>
<div class="t" style="left:221.50px;transform-origin:0 0;top:325.67px;font-size:12.5px;color:#000;font-weight:normal;transform:scaleX(0.8396);">A</div>
<div class="t" style="right:656.00px;transform-origin:100% 0;top:325.67px;font-size:12.5px;color:#000;font-weight:normal;transform:scaleX(0.8631);">56</div>
<div class="t" style="left:351.60px;transform-origin:0 0;top:325.67px;font-size:12.5px;color:#000;font-weight:normal;transform:scaleX(0.9271);">03/01/2019</div>
<div class="t" style="right:502.00px;transform-origin:100% 0;top:325.67px;font-size:12.5px;color:#000;font-weight:normal;transform:scaleX(0.8631);">22</div>
<div class="t" style="left:505.60px;transform-origin:0 0;top:325.67px;font-size:12.5px;color:#000;font-weight:normal;transform:scaleX(0.8580);">MMES58854</div>
<div class="t" style="left:618.60px;transform-origin:0 0;top:325.67px;font-size:12.5px;color:#000;font-weight:normal;transform:scaleX(0.8531);">MANISES</div>
<div class="t" style="right:258.00px;transform-origin:100% 0;top:325.67px;font-size:12.5px;color:#000;font-weight:normal;transform:scaleX(0.8631);">2</div>
<div class="t" style="right:194.00px;transform-origin:100% 0;top:325.67px;font-size:12.5px;color:#000;font-weight:normal;transform:scaleX(0.8631);">36</div>
<div class="t" style="right:161.00px;transform-origin:100% 0;top:325.67px;font-size:12.5px;color:#000;font-weight:normal;transform:scaleX(0.8073);">15 %</div>
<div class="t" style="right:128.00px;transform-origin:100% 0;top:325.67px;font-size:12.5px;color:#000;font-weight:normal;transform:scaleX(0.8073);">21 %</div>
<div class="t" style="right:47.00px;transform-origin:100% 0;top:325.67px;font-size:12.5px;color:#000;font-weight:normal;transform:scaleX(0.8632);">61,20</div>
<div class="hl" style="left:219px;top:360px;width:739px"></div>
<div class="t" style="left:221.50px;transform-origin:0 0;top:343.67px;font-size:12.5px;color:#000;font-weight:normal;transform:scaleX(0.8396);">A</div>
<div class="t" style="right:656.00px;transform-origin:100% 0;top:343.67px;font-size:12.5px;color:#000;font-weight:normal;transform:scaleX(0.8631);">57</div>
<div class="t" style="left:351.60px;transform-origin:0 0;top:343.67px;font-size:12.5px;color:#000;font-weight:normal;transform:scaleX(0.9271);">03/01/2019</div>
<div class="t" style="right:502.00px;transform-origin:100% 0;top:343.67px;font-size:12.5px;color:#000;font-weight:normal;transform:scaleX(0.8631);">16</div>
<div class="t" style="left:505.60px;transform-origin:0 0;top:343.67px;font-size:12.5px;color:#000;font-weight:normal;transform:scaleX(0.8441);">DOC ORIGEN</div>
<div class="t" style="right:258.00px;transform-origin:100% 0;top:343.67px;font-size:12.5px;color:#000;font-weight:normal;transform:scaleX(0.8631);">0</div>
<div class="t" style="right:194.00px;transform-origin:100% 0;top:343.67px;font-size:12.5px;color:#000;font-weight:normal;transform:scaleX(0.8631);">0</div>
<div class="t" style="right:161.00px;transform-origin:100% 0;top:343.67px;font-size:12.5px;color:#000;font-weight:normal;transform:scaleX(0.7893);">0 %</div>
<div class="t" style="right:128.00px;transform-origin:100% 0;top:343.67px;font-size:12.5px;color:#000;font-weight:normal;transform:scaleX(0.7893);">0 %</div>
<div class="t" style="right:47.00px;transform-origin:100% 0;top:343.67px;font-size:12.5px;color:#000;font-weight:normal;transform:scaleX(0.8632);">0,00</div>
<div class="hl" style="left:219px;top:378px;width:739px"></div>
<div class="t" style="left:221.50px;transform-origin:0 0;top:361.67px;font-size:12.5px;color:#000;font-weight:normal;transform:scaleX(0.8396);">A</div>
<div class="t" style="right:656.00px;transform-origin:100% 0;top:361.67px;font-size:12.5px;color:#000;font-weight:normal;transform:scaleX(0.8631);">57</div>
<div class="t" style="left:351.60px;transform-origin:0 0;top:361.67px;font-size:12.5px;color:#000;font-weight:normal;transform:scaleX(0.9271);">03/01/2019</div>
<div class="t" style="right:502.00px;transform-origin:100% 0;top:361.67px;font-size:12.5px;color:#000;font-weight:normal;transform:scaleX(0.8631);">16</div>
<div class="t" style="left:505.60px;transform-origin:0 0;top:361.67px;font-size:12.5px;color:#000;font-weight:normal;transform:scaleX(0.8473);">CSIL36991</div>
<div class="t" style="left:618.60px;transform-origin:0 0;top:361.67px;font-size:12.5px;color:#000;font-weight:normal;transform:scaleX(0.8531);">MANISES</div>
<div class="t" style="right:258.00px;transform-origin:100% 0;top:361.67px;font-size:12.5px;color:#000;font-weight:normal;transform:scaleX(0.8631);">5</div>
<div class="t" style="right:194.00px;transform-origin:100% 0;top:361.67px;font-size:12.5px;color:#000;font-weight:normal;transform:scaleX(0.8631);">19</div>
<div class="t" style="right:161.00px;transform-origin:100% 0;top:361.67px;font-size:12.5px;color:#000;font-weight:normal;transform:scaleX(0.8073);">20 %</div>
<div class="t" style="right:128.00px;transform-origin:100% 0;top:361.67px;font-size:12.5px;color:#000;font-weight:normal;transform:scaleX(0.8073);">21 %</div>
<div class="t" style="right:47.00px;transform-origin:100% 0;top:361.67px;font-size:12.5px;color:#000;font-weight:normal;transform:scaleX(0.8632);">76,00</div>
<div class="hl" style="left:219px;top:396px;width:739px"></div>
<div class="t" style="left:221.50px;transform-origin:0 0;top:379.67px;font-size:12.5px;color:#000;font-weight:normal;transform:scaleX(0.8396);">A</div>
<div class="t" style="right:656.00px;transform-origin:100% 0;top:379.67px;font-size:12.5px;color:#000;font-weight:normal;transform:scaleX(0.8631);">57</div>
<div class="t" style="left:351.60px;transform-origin:0 0;top:379.67px;font-size:12.5px;color:#000;font-weight:normal;transform:scaleX(0.9271);">03/01/2019</div>
<div class="t" style="right:502.00px;transform-origin:100% 0;top:379.67px;font-size:12.5px;color:#000;font-weight:normal;transform:scaleX(0.8631);">16</div>
<div class="t" style="left:505.60px;transform-origin:0 0;top:379.67px;font-size:12.5px;color:#000;font-weight:normal;transform:scaleX(0.8430);">CESP65653</div>
<div class="t" style="left:618.60px;transform-origin:0 0;top:379.67px;font-size:12.5px;color:#000;font-weight:normal;transform:scaleX(0.8531);">MANISES</div>
<div class="t" style="right:258.00px;transform-origin:100% 0;top:379.67px;font-size:12.5px;color:#000;font-weight:normal;transform:scaleX(0.8631);">5</div>
<div class="t" style="right:194.00px;transform-origin:100% 0;top:379.67px;font-size:12.5px;color:#000;font-weight:normal;transform:scaleX(0.8631);">149</div>
<div class="t" style="right:161.00px;transform-origin:100% 0;top:379.67px;font-size:12.5px;color:#000;font-weight:normal;transform:scaleX(0.7893);">0 %</div>
<div class="t" style="right:128.00px;transform-origin:100% 0;top:379.67px;font-size:12.5px;color:#000;font-weight:normal;transform:scaleX(0.8073);">21 %</div>
<div class="t" style="right:47.00px;transform-origin:100% 0;top:379.67px;font-size:12.5px;color:#000;font-weight:normal;transform:scaleX(0.8631);">745,00</div>
<div class="hl" style="left:219px;top:414px;width:739px"></div>
<div class="t" style="left:221.50px;transform-origin:0 0;top:397.67px;font-size:12.5px;color:#000;font-weight:normal;transform:scaleX(0.8396);">A</div>
<div class="t" style="right:656.00px;transform-origin:100% 0;top:397.67px;font-size:12.5px;color:#000;font-weight:normal;transform:scaleX(0.8631);">58</div>
<div class="t" style="left:351.60px;transform-origin:0 0;top:397.67px;font-size:12.5px;color:#000;font-weight:normal;transform:scaleX(0.9271);">03/01/2019</div>
<div class="t" style="right:502.00px;transform-origin:100% 0;top:397.67px;font-size:12.5px;color:#000;font-weight:normal;transform:scaleX(0.8631);">17</div>
<div class="t" style="left:505.60px;transform-origin:0 0;top:397.67px;font-size:12.5px;color:#000;font-weight:normal;transform:scaleX(0.8441);">DOC ORIGEN</div>
<div class="t" style="right:258.00px;transform-origin:100% 0;top:397.67px;font-size:12.5px;color:#000;font-weight:normal;transform:scaleX(0.8631);">0</div>
<div class="t" style="right:194.00px;transform-origin:100% 0;top:397.67px;font-size:12.5px;color:#000;font-weight:normal;transform:scaleX(0.8631);">0</div>
<div class="t" style="right:161.00px;transform-origin:100% 0;top:397.67px;font-size:12.5px;color:#000;font-weight:normal;transform:scaleX(0.7893);">0 %</div>
<div class="t" style="right:128.00px;transform-origin:100% 0;top:397.67px;font-size:12.5px;color:#000;font-weight:normal;transform:scaleX(0.7893);">0 %</div>
<div class="t" style="right:47.00px;transform-origin:100% 0;top:397.67px;font-size:12.5px;color:#000;font-weight:normal;transform:scaleX(0.8632);">0,00</div>
<div class="hl" style="left:219px;top:432px;width:739px"></div>
<div class="t" style="left:221.50px;transform-origin:0 0;top:415.67px;font-size:12.5px;color:#000;font-weight:normal;transform:scaleX(0.8396);">A</div>
<div class="t" style="right:656.00px;transform-origin:100% 0;top:415.67px;font-size:12.5px;color:#000;font-weight:normal;transform:scaleX(0.8631);">58</div>
<div class="t" style="left:351.60px;transform-origin:0 0;top:415.67px;font-size:12.5px;color:#000;font-weight:normal;transform:scaleX(0.9271);">03/01/2019</div>
<div class="t" style="right:502.00px;transform-origin:100% 0;top:415.67px;font-size:12.5px;color:#000;font-weight:normal;transform:scaleX(0.8631);">17</div>
<div class="t" style="left:505.60px;transform-origin:0 0;top:415.67px;font-size:12.5px;color:#000;font-weight:normal;transform:scaleX(0.8473);">CSIL36991</div>
<div class="t" style="left:618.60px;transform-origin:0 0;top:415.67px;font-size:12.5px;color:#000;font-weight:normal;transform:scaleX(0.8531);">MANISES</div>
<div class="t" style="right:258.00px;transform-origin:100% 0;top:415.67px;font-size:12.5px;color:#000;font-weight:normal;transform:scaleX(0.8631);">5</div>
<div class="t" style="right:194.00px;transform-origin:100% 0;top:415.67px;font-size:12.5px;color:#000;font-weight:normal;transform:scaleX(0.8631);">19</div>
<div class="t" style="right:161.00px;transform-origin:100% 0;top:415.67px;font-size:12.5px;color:#000;font-weight:normal;transform:scaleX(0.8073);">20 %</div>
<div class="t" style="right:128.00px;transform-origin:100% 0;top:415.67px;font-size:12.5px;color:#000;font-weight:normal;transform:scaleX(0.8073);">21 %</div>
<div class="t" style="right:47.00px;transform-origin:100% 0;top:415.67px;font-size:12.5px;color:#000;font-weight:normal;transform:scaleX(0.8632);">76,00</div>
<svg style="left:40px;top:200px" width="150" height="50" viewBox="40 200 150 50"><rect x="50.3" y="209.4" width="130.4" height="30" fill="none" stroke="#ea1f2d" stroke-width="4.5"/></svg>
<svg style="left:170px;top:140px" width="120" height="80" viewBox="170 140 120 80"><path d="M185.5 200 L260 160" stroke="#e9212d" stroke-width="4.4" stroke-linecap="round" fill="none"/><path d="M236.5 158 L263.3 157.6 L251.5 181.5" stroke="#e9212d" stroke-width="4.4" stroke-linecap="round" stroke-linejoin="miter" fill="none"/></svg>
</body></html>
